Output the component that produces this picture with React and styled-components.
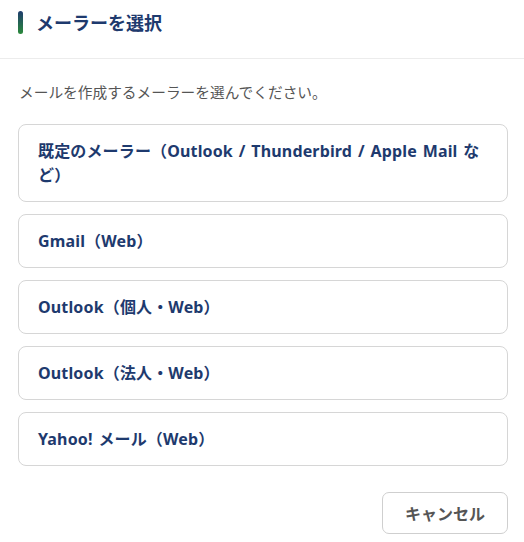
import styled, { createGlobalStyle } from "styled-components";

const GlobalStyle = createGlobalStyle`
  html, body {
    margin: 0;
    padding: 0;
    background: #fff;
  }
  body {
    font-family: "Noto Sans", "Noto Sans CJK JP", sans-serif;
  }
`;

const Dialog = styled.div`
  width: 524px;
  height: 542px;
  background: #fff;
  box-sizing: border-box;
`;

const Header = styled.div`
  display: flex;
  align-items: center;
  gap: 13px;
  height: 59px;
  padding: 0 18px 14px;
  box-sizing: border-box;
  border-bottom: 1px solid #ececec;
`;

const Accent = styled.span`
  width: 5px;
  height: 23px;
  border-radius: 3px;
  background: linear-gradient(180deg, #1f3c6e 0%, #2a8a3a 100%);
`;

const Title = styled.h2`
  margin: 0;
  font-size: 18px;
  font-weight: 700;
  color: #1e3a6e;
`;

const Body = styled.div`
  padding: 23px 16px 0 18px;
`;

const Desc = styled.p`
  margin: 0 0 22px 1px;
  font-size: 14.7px;
  color: #555;
  line-height: 20px;
`;

const List = styled.div`
  display: flex;
  flex-direction: column;
  gap: 12px;
`;

const Option = styled.button`
  display: block;
  width: 100%;
  text-align: left;
  background: #fff;
  border: 1px solid #d6d6d6;
  border-radius: 8px;
  padding: 14px 19px;
  font-family: inherit;
  font-size: 16px;
  font-weight: 700;
  line-height: 24px;
  letter-spacing: 0.15px;
  word-spacing: 1.5px;
  color: #1e3a6e;
  cursor: pointer;
`;

const Footer = styled.div`
  display: flex;
  justify-content: flex-end;
  padding-top: 26px;
`;

const CancelButton = styled.button`
  width: 126px;
  height: 42px;
  background: #fff;
  border: 1px solid #cfcfcf;
  border-radius: 7px;
  font-family: inherit;
  font-size: 16px;
  font-weight: 700;
  color: #555;
  cursor: pointer;
`;

const mailers = [
  "既定のメーラー（Outlook / Thunderbird / Apple Mail など）",
  "Gmail（Web）",
  "Outlook（個人・Web）",
  "Outlook（法人・Web）",
  "Yahoo! メール（Web）",
];

export default function App() {
  return (
    <Dialog>
      <GlobalStyle />
      <Header>
        <Accent />
        <Title>メーラーを選択</Title>
      </Header>
      <Body>
        <Desc>メールを作成するメーラーを選んでください。</Desc>
        <List>
          {mailers.map((m) => (
            <Option key={m}>{m}</Option>
          ))}
        </List>
        <Footer>
          <CancelButton>キャンセル</CancelButton>
        </Footer>
      </Body>
    </Dialog>
  );
}
